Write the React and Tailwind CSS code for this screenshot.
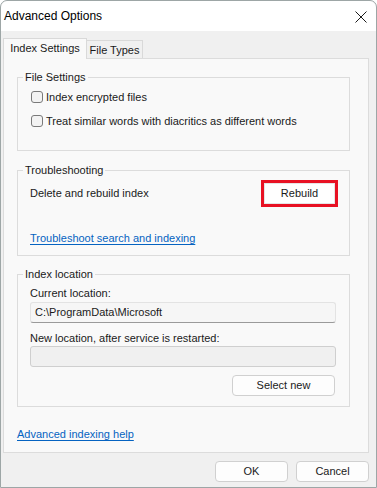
import React from 'react';

const font = { fontFamily: '"Liberation Sans", Arial, sans-serif' };

const Group = ({ title, className, children }) => (
  <div className={`relative border border-[#dcdcdc] box-border ${className}`}>
    <span className="absolute -top-[8px] left-[5px] px-[2px] bg-[#f9f9f9] leading-[14px] text-[11px] text-[#1a1a1a]">
      {title}
    </span>
    {children}
  </div>
);

const Check = ({ label }) => (
  <label className="flex items-center h-[16px] gap-[3px]">
    <span className="w-[12px] h-[12px] rounded-[3px] border border-[#7a7a7a] bg-[#f3f3f3] box-border" />
    <span className="leading-[14px]">{label}</span>
  </label>
);

const WinButton = ({ children, className = '' }) => (
  <button className={`h-[21px] rounded-[4px] bg-[#fdfdfd] border border-[#d0d0d0] text-[11px] text-[#1a1a1a] leading-none ${className}`}>
    {children}
  </button>
);

export default function App() {
  return (
    <div style={font} className="w-[377px] h-[488px] box-border border border-[#9da6a6] rounded-t-[7px] bg-[#f0f0f0] flex flex-col text-[11px] text-[#1a1a1a] overflow-hidden">
      {/* Title bar */}
      <div className="h-[30px] bg-white flex items-center justify-between pl-[3px] pr-[9px] rounded-t-[7px]">
        <span className="text-[12px] leading-none text-black">Advanced Options</span>
        <svg width="12" height="12" viewBox="0 0 12 12" className="mt-[1px]">
          <path d="M0.5 0.5 L11.5 11.5 M11.5 0.5 L0.5 11.5" stroke="#1a1a1a" strokeWidth="1" fill="none" />
        </svg>
      </div>

      {/* Tabs */}
      <div className="pl-[2px] pt-[7px] flex items-end h-[27px] box-border">
        <div className="relative z-10 h-[21px] w-[84px] -mb-[1px] bg-[#f9f9f9] border border-b-0 border-[#d9d9d9] flex items-center justify-center pb-[2px] box-border">
          Index Settings
        </div>
        <div className="h-[18px] w-[56px] border-t border-r border-[#d9d9d9] bg-[#f0f0f0] flex items-center justify-center pt-[1px] box-border">
          File Types
        </div>
      </div>

      {/* Tab panel */}
      <div className="ml-[2px] w-[366px] h-[395px] box-border bg-[#f9f9f9] border border-[#dcdcdc] pl-[13px] pt-[18px] flex flex-col">
        <Group title="File Settings" className="w-[333px] h-[74px] pt-[11px] pl-[13px] flex flex-col gap-[8px]">
          <Check label="Index encrypted files" />
          <Check label="Treat similar words with diacritics as different words" />
        </Group>

        <Group title="Troubleshooting" className="mt-[19px] w-[333px] h-[86px] pt-[9px] pl-[12px] pr-[11px]">
          <div className="flex items-center justify-between h-[27px]">
            <span>Delete and rebuild index</span>
            <div className="w-[77px] h-[27px] border-[3px] border-[#e81123] box-border">
              <button className="w-full h-full bg-white border border-[#e5e5e5] text-[11px] leading-none box-border">
                Rebuild
              </button>
            </div>
          </div>
          <a className="block mt-[24px] leading-[14px] text-[#0563c1] underline underline-offset-[2px] w-fit" href="#">
            Troubleshoot search and indexing
          </a>
        </Group>

        <Group title="Index location" className="mt-[18px] w-[333px] h-[133px] pt-[11px] pl-[12px] flex flex-col">
          <span className="leading-[14px]">Current location:</span>
          <div className="mt-[2px] w-[306px] h-[21px] box-border bg-[#f6f6f6] border border-[#e3e3e3] border-b-[#9a9a9a] rounded-[3px] flex items-center pl-[4px]">
            C:\ProgramData\Microsoft
          </div>
          <span className="mt-[8px] leading-[14px]">New location, after service is restarted:</span>
          <div className="mt-[1px] w-[306px] h-[21px] box-border bg-[#f0f0f0] border border-[#cfcfcf] rounded-[3px]" />
          <div className="mt-[8px] w-[306px] flex justify-end pr-[1px]">
            <WinButton className="w-[103px]">Select new</WinButton>
          </div>
        </Group>

        <a className="block mt-[20px] leading-[14px] text-[#0563c1] underline underline-offset-[2px] w-fit" href="#">
          Advanced indexing help
        </a>
      </div>

      {/* Footer buttons */}
      <div className="mt-[8px] flex justify-end gap-[8px] pr-[7px]">
        <WinButton className="w-[73px] border-[#0067c0]">OK</WinButton>
        <WinButton className="w-[73px]">Cancel</WinButton>
      </div>
    </div>
  );
}
